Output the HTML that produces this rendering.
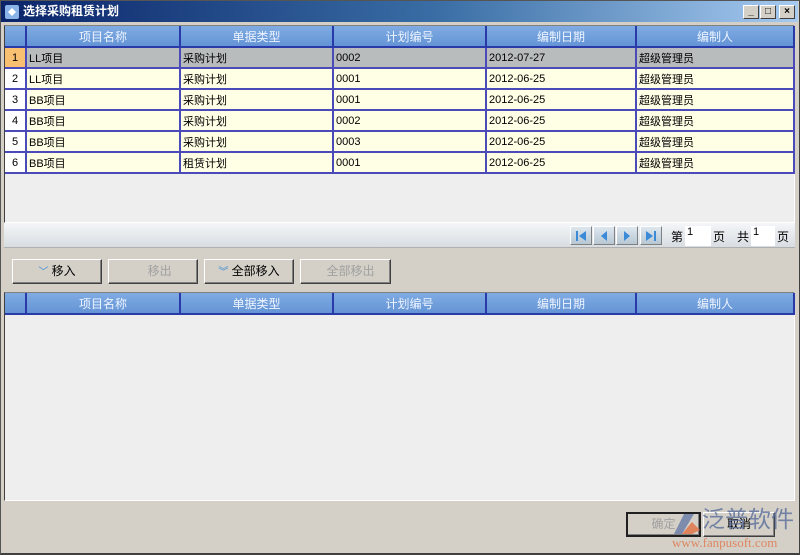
<!DOCTYPE html>
<html><head><meta charset="utf-8">
<style>
*{margin:0;padding:0;box-sizing:border-box}
html,body{overflow:hidden}
body{width:800px;height:555px;background:#d4d0c8;font-family:"Liberation Sans","Noto Sans CJK SC","WenQuanYi Zen Hei",sans-serif;font-size:12px;position:relative;overflow:hidden;color:#000}
.abs{position:absolute;white-space:nowrap}
#frame{left:0;top:0;width:800px;height:555px;border:1px solid #555;border-right-color:#404040;border-bottom:2px solid #404040}
#title{left:1px;top:1px;width:797px;height:21px;background:linear-gradient(90deg,#0a246a 0%,#3a6ea5 55%,#a6caf0 100%);color:#fff;font-weight:bold;font-size:12px;line-height:21px;padding-left:22px}
.wb{top:5px;width:16px;height:14px;background:#d4d0c8;border:1px solid;border-color:#fff #404040 #404040 #fff;font-size:10px;line-height:12px;text-align:center;font-weight:bold}
.grid{background:#eeeeee;border:1px solid;border-color:#808080 #fff #fff #404040}
table{border-collapse:collapse;table-layout:fixed;position:absolute;left:0;top:0}
th{height:21px;background:linear-gradient(#80ace2,#6494d6);color:#eef4ff;font-weight:normal;font-size:12px;border-right:2px solid #2a3aa8;border-bottom:2px solid #2a3aa8}
td{height:21px;border-right:2px solid #4a4ab8;border-bottom:2px solid #4a4ab8;padding-left:2px;font-size:11px;white-space:nowrap;overflow:hidden;background:#ffffe6}
td.n{background:#fff;text-align:center;padding:0}
tr.sel td{background:#b8bcbc}
tr.sel td.n{background:#f8c070}
.btn{height:25px;border:1px solid;border-color:#fff #404040 #404040 #fff;box-shadow:inset -1px -1px 0 #808080;background:#d4d0c8;text-align:center;line-height:23px;font-size:12px}
.dis{color:#a0a0a0}
.pg{top:226px;width:22px;height:19px;border:1px solid;border-color:#fff #808080 #808080 #fff;background:linear-gradient(#dde6ee,#b8c8d4)}
</style></head><body>
<div id="frame" class="abs"></div>
<div id="title" class="abs">选择采购租赁计划</div>
<svg class="abs" style="left:4px;top:4px" width="16" height="16"><rect x="1" y="1" width="14" height="14" rx="2" fill="#8ab4e8"/><path d="M4 8 L8 4 L12 8 L8 12Z" fill="#fff"/></svg>
<div class="abs wb" style="left:743px">_</div>
<div class="abs wb" style="left:760px">□</div>
<div class="abs wb" style="left:779px">×</div>

<div class="abs grid" style="left:4px;top:25px;width:791px;height:198px">
<table style="width:789px">
<colgroup><col style="width:21px"><col style="width:154px"><col style="width:153px"><col style="width:153px"><col style="width:150px"><col style="width:158px"></colgroup>
<tr><th></th><th>项目名称</th><th>单据类型</th><th>计划编号</th><th>编制日期</th><th>编制人</th></tr>
<tr class="sel"><td class="n">1</td><td>LL项目</td><td>采购计划</td><td>0002</td><td>2012-07-27</td><td>超级管理员</td></tr>
<tr><td class="n">2</td><td>LL项目</td><td>采购计划</td><td>0001</td><td>2012-06-25</td><td>超级管理员</td></tr>
<tr><td class="n">3</td><td>BB项目</td><td>采购计划</td><td>0001</td><td>2012-06-25</td><td>超级管理员</td></tr>
<tr><td class="n">4</td><td>BB项目</td><td>采购计划</td><td>0002</td><td>2012-06-25</td><td>超级管理员</td></tr>
<tr><td class="n">5</td><td>BB项目</td><td>采购计划</td><td>0003</td><td>2012-06-25</td><td>超级管理员</td></tr>
<tr><td class="n">6</td><td>BB项目</td><td>租赁计划</td><td>0001</td><td>2012-06-25</td><td>超级管理员</td></tr>
</table></div>
<div class="abs" style="left:4px;top:223px;width:791px;height:25px;background:linear-gradient(#f4f6f8,#d8dde2);border-bottom:1px solid #b0b0b0"></div>
<div class="abs pg" style="left:570px"><svg width="20" height="17"><rect x="5" y="4" width="2" height="10" fill="#3a8ad8"/><path d="M15 4 L8 9 L15 14Z" fill="#3a8ad8"/></svg></div>
<div class="abs pg" style="left:593px"><svg width="20" height="17"><path d="M13 4 L7 9 L13 14Z" fill="#3a8ad8"/></svg></div>
<div class="abs pg" style="left:616px"><svg width="20" height="17"><path d="M7 4 L13 9 L7 14Z" fill="#3a8ad8"/></svg></div>
<div class="abs pg" style="left:640px"><svg width="20" height="17"><path d="M5 4 L12 9 L5 14Z" fill="#3a8ad8"/><rect x="13" y="4" width="2" height="10" fill="#3a8ad8"/></svg></div>
<div class="abs" style="left:671px;top:228px;font-size:12px">第</div>
<div class="abs" style="left:685px;top:226px;width:26px;height:20px;background:#fff;font-size:11px;padding-left:2px">1</div>
<div class="abs" style="left:713px;top:228px">页</div>
<div class="abs" style="left:737px;top:228px">共</div>
<div class="abs" style="left:751px;top:226px;width:24px;height:20px;background:#fff;font-size:11px;padding-left:2px">1</div>
<div class="abs" style="left:777px;top:228px">页</div>

<div class="abs btn" style="left:12px;top:259px;width:90px"><span style="color:#3a8ad8;font-size:10px">﹀</span> 移入</div>
<div class="abs btn dis" style="left:108px;top:259px;width:90px">&nbsp;&nbsp;&nbsp;&nbsp;移出</div>
<div class="abs btn" style="left:204px;top:259px;width:90px"><span style="color:#3a8ad8;font-size:10px">︾</span> 全部移入</div>
<div class="abs btn dis" style="left:300px;top:259px;width:91px">&nbsp;&nbsp;&nbsp;全部移出</div>

<div class="abs grid" style="left:4px;top:292px;width:791px;height:209px">
<table style="width:789px">
<colgroup><col style="width:21px"><col style="width:154px"><col style="width:153px"><col style="width:153px"><col style="width:150px"><col style="width:158px"></colgroup>
<tr><th></th><th>项目名称</th><th>单据类型</th><th>计划编号</th><th>编制日期</th><th>编制人</th></tr>
</table></div>

<div class="abs btn dis" style="left:626px;top:512px;width:75px;border:2px solid #202020;line-height:21px">确定</div>
<div class="abs btn" style="left:703px;top:512px;width:72px">取消</div>
<svg class="abs" style="left:668px;top:508px" width="40" height="30"><path d="M6 26 L16 6 L26 6 L14 26Z" fill="#6d7fa8" opacity=".85"/><path d="M14 26 L24 14 L32 22 L24 26Z" fill="#e07a50" opacity=".9"/></svg>
<div class="abs" style="left:702px;top:505px;font-size:23px;color:#5a6e9a;opacity:.8;line-height:28px">泛普软件</div>
<div class="abs" style="left:672px;top:535px;font-size:13px;color:#e07a50;font-family:'Liberation Serif',serif;opacity:.85">www.fanpusoft.com</div>
</body></html>
